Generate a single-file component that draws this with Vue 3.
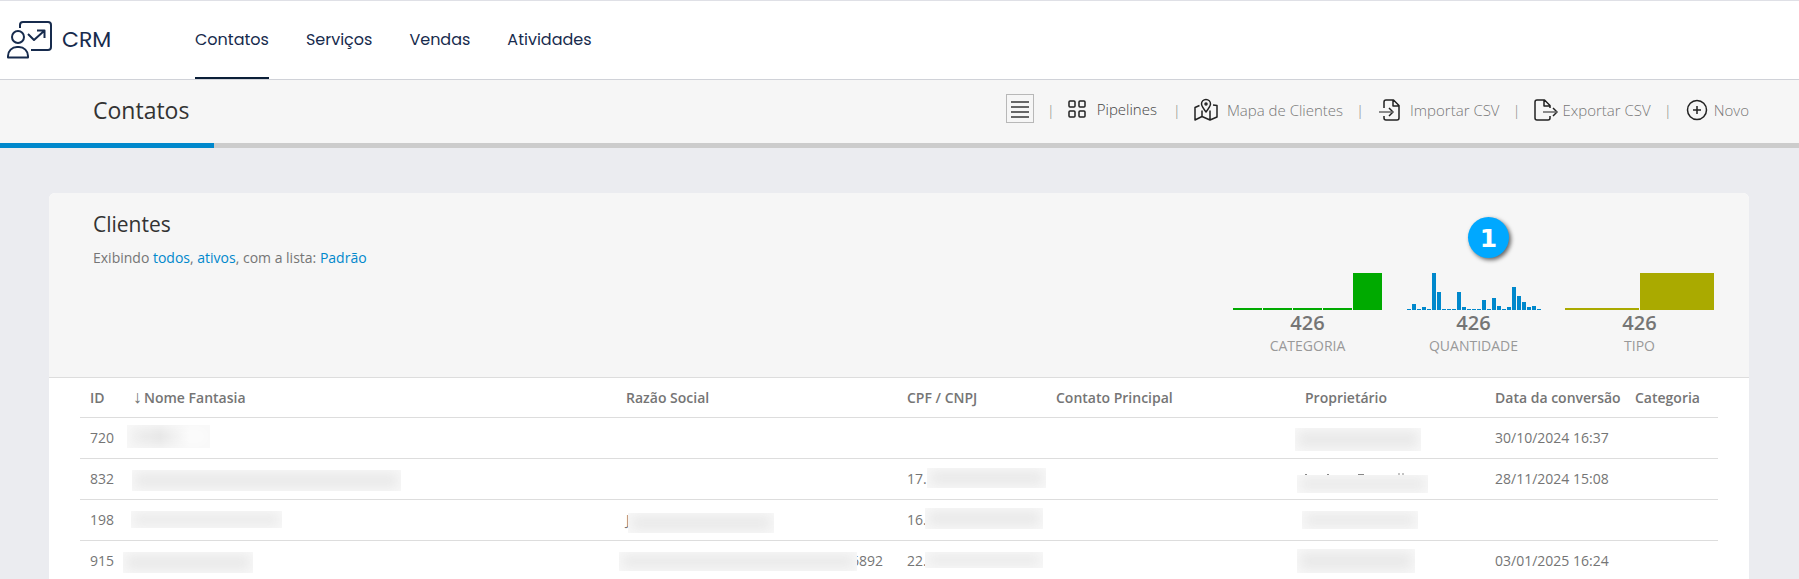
<script setup>
import { ref } from 'vue'

const modules = ['Contatos', 'Serviços', 'Vendas', 'Atividades']
const activeModule = ref('Contatos')

const charts = [
  { label: 'Categoria', total: 426, color: 'green', bars: [2, 2, 2, 2, 37] },
  {
    label: 'Quantidade',
    total: 426,
    color: 'blue',
    bars: [1, 6, 1, 3, 1, 37, 18, 1, 1, 1, 18, 3, 1, 1, 1, 10, 1, 12, 4, 1, 3, 23, 14, 8, 3, 4, 1]
  },
  { label: 'Tipo', total: 426, color: 'gold', bars: [2, 37] }
]

const columns = [
  { key: 'id', label: 'ID' },
  { key: 'name', label: 'Nome Fantasia', sorted: true },
  { key: 'company', label: 'Razão Social' },
  { key: 'document', label: 'CPF / CNPJ' },
  { key: 'contact', label: 'Contato Principal' },
  { key: 'owner', label: 'Proprietário' },
  { key: 'converted', label: 'Data da conversão' },
  { key: 'category', label: 'Categoria' }
]

// mask: [left, top, width, height] of the grey patch that hides private data in a cell
const rows = [
  {
    id: { text: '720' },
    name: { mask: [4, 7, 83, 23], fade: true },
    owner: { mask: [0, 10, 126, 23] },
    converted: { text: '30/10/2024 16:37' }
  },
  {
    id: { text: '832' },
    name: { mask: [9, 11, 269, 21] },
    document: { text: '17.', mask: [30, 9, 119, 20] },
    owner: { mask: [2, 16, 131, 18], ticks: true },
    converted: { text: '28/11/2024 15:08' }
  },
  {
    id: { text: '198' },
    name: { mask: [8, 11, 151, 17] },
    company: { text: 'J', mask: [12, 13, 146, 20] },
    document: { text: '16.', mask: [28, 8, 118, 21] },
    owner: { mask: [7, 11, 116, 18] }
  },
  {
    id: { text: '915' },
    name: { mask: [0, 11, 130, 21] },
    company: { text: '6892', mask: [3, 11, 238, 19], end: true },
    document: { text: '22.', mask: [28, 11, 118, 16] },
    owner: { mask: [2, 8, 118, 24] },
    converted: { text: '03/01/2025 16:24' }
  }
]

const maskStyle = ([left, top, width, height]) => ({
  left: `${left}px`,
  top: `${top}px`,
  width: `${width}px`,
  height: `${height}px`
})
</script>

<template>
  <div class="page">
    <header class="topbar">
      <a href="#" class="brand">
        <svg class="brand-icon" viewBox="0 0 46 38" aria-hidden="true">
          <path d="M13 7V4a3 3 0 0 1 3-3h25a3 3 0 0 1 3 3v22a3 3 0 0 1-3 3H24" />
          <circle cx="11" cy="16" r="6" />
          <path d="M1 36.500v-1.500a9 9 0 0 1 9-9h2a9 9 0 0 1 9 9v1.500z" />
          <path d="M21 13l6 6 10-9M30 9.500h7.500V17" />
        </svg>
        <span>CRM</span>
      </a>
      <nav class="modules">
        <a
          v-for="item in modules"
          :key="item"
          href="#"
          :class="['module', { active: item === activeModule }]"
          @click.prevent="activeModule = item"
        >{{ item }}</a>
      </nav>
    </header>

    <section class="subheader">
      <h1>Contatos</h1>
      <div class="actions">
        <button type="button" class="list-button" aria-label="Lista">
          <svg viewBox="0 0 18 18"><path d="M0 2h18M0 7h18M0 12h18M0 17h18" /></svg>
        </button>
        <span class="separator">|</span>
        <a href="#" class="action pipelines">
          <svg class="icon" viewBox="0 0 20 24">
            <rect x="1" y="4" width="6" height="6" rx="1" />
            <rect x="11" y="4" width="6" height="6" rx="1" />
            <rect x="1" y="14" width="6" height="6" rx="1" />
            <rect x="11" y="14" width="6" height="6" rx="1" />
          </svg>
          <span>Pipelines</span>
        </a>
        <span class="separator">|</span>
        <a href="#" class="action">
          <svg class="icon" viewBox="0 0 24 24">
            <path d="M12 14c-3-4-4.500-6-4.500-8a4.500 4.500 0 0 1 9 0c0 2-1.500 4-4.500 8z" />
            <circle cx="12" cy="6" r="1" />
            <path d="M5.500 7.500L1 9.500V22l7-3.500 8 3.500 7-3V7.500l-4-.500M8 12.500v6M16 12.500V22" />
          </svg>
          <span>Mapa de Clientes</span>
        </a>
        <span class="separator">|</span>
        <a href="#" class="action">
          <svg class="icon" viewBox="0 0 24 24">
            <path d="M7 10V4a2 2 0 0 1 2-2h7.500L22 7.500V20a2 2 0 0 1-2 2H9a2 2 0 0 1-2-2v-2M16 2v6h6M12 10l4 4-4 4" />
            <path class="shaft" d="M2 14h14" />
          </svg>
          <span>Importar CSV</span>
        </a>
        <span class="separator">|</span>
        <a href="#" class="action tight">
          <svg class="icon" viewBox="0 0 24 24">
            <path d="M16 18v2a2 2 0 0 1-2 2H3a2 2 0 0 1-2-2V4a2 2 0 0 1 2-2h7.500L16 7.500V10M10 2v6h6M19 10l4 4-4 4" />
            <path class="shaft" d="M9 14h14" />
          </svg>
          <span>Exportar CSV</span>
        </a>
        <span class="separator">|</span>
        <a href="#" class="action tight">
          <svg class="icon" viewBox="0 0 24 24">
            <circle cx="12" cy="12" r="9.500" />
            <path d="M12 8v8M8 12h8" />
          </svg>
          <span>Novo</span>
        </a>
      </div>
    </section>
    <div class="progress"><div class="progress-value"></div></div>

    <main class="card">
      <div class="card-header">
        <div>
          <h2>Clientes</h2>
          <p class="filters">
            Exibindo <a href="#">todos</a>, <a href="#">ativos</a>, com a lista: <a href="#">Padrão</a>
          </p>
        </div>
        <div class="charts">
          <div v-for="chart in charts" :key="chart.label" :class="['chart', chart.color]">
            <div class="bars">
              <span v-for="(bar, i) in chart.bars" :key="i" class="bar" :style="{ height: `${bar}px` }"></span>
            </div>
            <strong>{{ chart.total }}</strong>
            <span class="chart-label">{{ chart.label }}</span>
          </div>
          <span class="step">1</span>
        </div>
      </div>

      <div class="table-wrapper">
        <table>
          <colgroup>
            <col v-for="column in columns" :key="column.key" :class="`col-${column.key}`">
          </colgroup>
          <thead>
            <tr>
              <th v-for="column in columns" :key="column.key" scope="col">
                <span v-if="column.sorted" class="sort">↓</span>{{ column.label }}
              </th>
            </tr>
          </thead>
          <tbody>
            <tr v-for="row in rows" :key="row.id.text">
              <td v-for="column in columns" :key="column.key">
                <div v-if="row[column.key]" :class="['cell', { end: row[column.key].end }]">
                  <span>{{ row[column.key].text }}</span>
                  <svg v-if="row[column.key].ticks" class="ticks" viewBox="0 0 110 3" aria-hidden="true">
                    <path d="M1 1.500h2M23 1.500h2M54 1.500h6M94 1h2M98 1h2" />
                  </svg>
                  <span
                    v-if="row[column.key].mask"
                    :class="['mask', { fade: row[column.key].fade }]"
                    :style="maskStyle(row[column.key].mask)"
                  ></span>
                </div>
              </td>
            </tr>
          </tbody>
        </table>
      </div>
    </main>
  </div>
</template>

<style>
body {
  margin: 0;
  background: #ebecf0;
  overflow: hidden;
}
</style>

<style scoped>
.page {
  font-family: "Open Sans", sans-serif;
  font-size: 14px;
  line-height: 20px;
  color: #757575;
}

a {
  color: #0088cc;
  text-decoration: none;
}

.topbar {
  display: flex;
  height: 78px;
  border-top: 1px solid #dfe0e6;
  border-bottom: 1px solid #d0d2d8;
  background: #fff;
  font-family: Poppins, Inter, sans-serif;
}

.brand {
  display: flex;
  align-items: center;
  gap: 9px;
  width: 189px;
  padding-left: 7px;
  box-sizing: border-box;
  color: #172b4d;
  font-size: 22px;
}

.brand-icon {
  width: 46px;
  height: 38px;
  fill: none;
  stroke: #172b4d;
  stroke-width: 2;
  stroke-linejoin: round;
}

.modules {
  display: flex;
  gap: 37px;
  padding-left: 6px;
}

.module {
  box-sizing: border-box;
  padding-top: 2px;
  border-bottom: 2px solid transparent;
  color: #172b4d;
  font-size: 16px;
  line-height: 74px;
}

.module.active {
  border-bottom-color: #0b1f38;
}

.subheader {
  display: flex;
  justify-content: space-between;
  align-items: center;
  height: 60px;
  padding: 0 50px 3px 93px;
  background: #f6f6f6;
}

h1 {
  margin: 0;
  color: #333;
  font-size: 23px;
  font-weight: 400;
  line-height: 32px;
}

.actions {
  display: flex;
  align-items: center;
  font-size: 15px;
  font-weight: 300;
}

.list-button {
  display: flex;
  align-items: center;
  justify-content: center;
  width: 28px;
  height: 29px;
  margin-bottom: 3px;
  padding: 0;
  border: 1px solid #b8b8b8;
  background: transparent;
}

.list-button svg {
  width: 18px;
  height: 18px;
  stroke: #666;
  stroke-width: 2;
}

.separator {
  width: 34px;
  color: #888;
  text-align: center;
}

.action {
  display: flex;
  align-items: center;
  gap: 9px;
  color: #777;
}

.action.pipelines {
  margin: 0 3px 3px 0;
  color: #444;
}

.action.tight {
  gap: 5px;
}

.icon {
  width: 24px;
  height: 24px;
  fill: none;
  stroke: #222;
  stroke-width: 1.500;
  stroke-linejoin: round;
}

.pipelines .icon {
  width: 20px;
}

.shaft {
  stroke: #666;
}

.progress {
  height: 5px;
  background: #ccc;
}

.progress-value {
  width: 214px;
  height: 5px;
  background: #0088cc;
}

.card {
  margin: 45px 50px 0 49px;
  border-radius: 6px 6px 0 0;
  background: #fff;
  overflow: hidden;
}

.card-header {
  display: flex;
  justify-content: space-between;
  height: 184px;
  padding: 0 35px 0 44px;
  box-sizing: border-box;
  background: #f6f6f6;
}

h2 {
  margin: 15px 0 0;
  color: #333;
  font-size: 21px;
  font-weight: 400;
  line-height: 32px;
}

.filters {
  margin: 8px 0 0;
}

.charts {
  position: relative;
  display: flex;
  gap: 17px;
  padding-top: 80px;
}

.chart {
  display: flex;
  flex-direction: column;
  align-items: center;
  width: 149px;
}

.bars {
  display: flex;
  align-items: flex-end;
  gap: 1px;
  width: 149px;
  height: 37px;
}

.bar {
  flex: 1;
}

.blue .bars {
  width: 134px;
}

.green .bar {
  background: #00aa00;
}

.blue .bar {
  background: #0088cc;
}

.gold .bar {
  background: #aaaa00;
}

.chart strong {
  font-size: 20px;
  font-weight: 600;
  line-height: 26px;
}

.chart-label {
  color: #999;
  text-transform: uppercase;
}

.step {
  position: absolute;
  top: 24px;
  left: 235px;
  width: 41px;
  height: 41px;
  border-radius: 50%;
  background: #00a8ff;
  box-shadow: 2px 2px 4px rgba(0, 0, 0, 0.6);
  color: #fff;
  font: bold 25px/43px "DejaVu Sans", sans-serif;
  text-align: center;
}

.table-wrapper {
  padding: 0 31px;
  border-top: 1px solid #ddd;
}

table {
  width: 100%;
  border-collapse: separate;
  border-spacing: 0;
  table-layout: fixed;
}

.col-id { width: 43px; }
.col-name { width: 493px; }
.col-company { width: 281px; }
.col-document { width: 149px; }
.col-contact { width: 249px; }
.col-owner { width: 190px; }
.col-converted { width: 140px; }
.col-category { width: 93px; }

th,
td {
  padding: 0;
  border-bottom: 1px solid #ddd;
  text-align: left;
  white-space: nowrap;
}

th {
  padding: 10px 10px 9px;
  font-weight: 600;
}

.sort {
  margin-right: 2px;
  font-size: 18px;
  font-weight: 400;
  line-height: 16px;
}

.cell {
  position: relative;
  height: 20px;
  padding: 10px;
}

.cell.end {
  padding-right: 14px;
  text-align: right;
}

.mask {
  position: absolute;
  background: #e9e9e9;
  box-shadow: inset 0 0 12px 3px #f8f8f8;
}

.mask.fade {
  background: linear-gradient(90deg, #f0f0f0, #e6e6e6 40%, #fcfcfc 75%);
}

.ticks {
  position: absolute;
  top: 14px;
  left: 9px;
  width: 110px;
  height: 3px;
  stroke: #888;
}
</style>
